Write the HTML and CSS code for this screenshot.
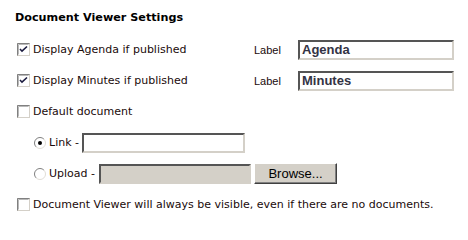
FILE: index.html
```html
<!DOCTYPE html>
<html>
<head>
<meta charset="utf-8">
<link rel="stylesheet" href="styles.css">
</head>
<body>
<div class="panel">
  <div class="title">Document Viewer Settings</div>

  <div class="row">
    <span class="chk"><svg width="13" height="13" viewBox="0 0 13 13"><rect x="0.5" y="0.5" width="12" height="12" fill="#fff" stroke="#d4d0c8"/><path d="M0.5 12.5V0.5H12.5" fill="none" stroke="#808080"/><path d="M1.5 11.5V1.5H11.5" fill="none" stroke="#b8b8b8"/><path d="M3 6l2 2.2L10 3.5" fill="none" stroke="#1c1c40" stroke-width="1.6"/></svg></span>
    <span class="text main">Display Agenda if published</span>
    <span class="lbl">Label</span>
    <span class="field bold">Agenda</span>
  </div>

  <div class="row">
    <span class="chk"><svg width="13" height="13" viewBox="0 0 13 13"><rect x="0.5" y="0.5" width="12" height="12" fill="#fff" stroke="#d4d0c8"/><path d="M0.5 12.5V0.5H12.5" fill="none" stroke="#808080"/><path d="M1.5 11.5V1.5H11.5" fill="none" stroke="#b8b8b8"/><path d="M3 6l2 2.2L10 3.5" fill="none" stroke="#1c1c40" stroke-width="1.6"/></svg></span>
    <span class="text main">Display Minutes if published</span>
    <span class="lbl">Label</span>
    <span class="field bold">Minutes</span>
  </div>

  <div class="row">
    <span class="chk"><svg width="13" height="13" viewBox="0 0 13 13"><rect x="0.5" y="0.5" width="12" height="12" fill="#fff" stroke="#d4d0c8"/><path d="M0.5 12.5V0.5H12.5" fill="none" stroke="#808080"/><path d="M1.5 11.5V1.5H11.5" fill="none" stroke="#b8b8b8"/></svg></span>
    <span class="text">Default document</span>
  </div>

  <div class="row sub">
    <span class="radio"><svg width="12" height="12" viewBox="0 0 12 12"><circle cx="6" cy="6" r="5.5" fill="#fff"/><path d="M2.1 9.9A5.5 5.5 0 0 1 9.9 2.1" fill="none" stroke="#808080"/><path d="M9.9 2.1A5.5 5.5 0 0 1 2.1 9.9" fill="none" stroke="#e0ddd6"/><circle cx="6" cy="6" r="2" fill="#000"/></svg></span>
    <span class="text">Link -</span>
    <span class="field link"></span>
  </div>

  <div class="row sub">
    <span class="radio"><svg width="12" height="12" viewBox="0 0 12 12"><circle cx="6" cy="6" r="5.5" fill="#fff"/><path d="M2.1 9.9A5.5 5.5 0 0 1 9.9 2.1" fill="none" stroke="#808080"/><path d="M9.9 2.1A5.5 5.5 0 0 1 2.1 9.9" fill="none" stroke="#e0ddd6"/></svg></span>
    <span class="text">Upload -</span>
    <span class="field file"></span>
    <span class="browse">Browse...</span>
  </div>

  <div class="row">
    <span class="chk"><svg width="13" height="13" viewBox="0 0 13 13"><rect x="0.5" y="0.5" width="12" height="12" fill="#fff" stroke="#d4d0c8"/><path d="M0.5 12.5V0.5H12.5" fill="none" stroke="#808080"/><path d="M1.5 11.5V1.5H11.5" fill="none" stroke="#b8b8b8"/></svg></span>
    <span class="text">Document Viewer will always be visible, even if there are no documents.</span>
  </div>
</div>
</body>
</html>
```

FILE: styles.css
```css
html, body {
  margin: 0;
  padding: 0;
  background: #fff;
}
.panel {
  padding: 9px 0 0 15px;
  font-family: "DejaVu Sans", Verdana, sans-serif;
  font-size: 11px;
  color: #1a0a0a;
}
.title {
  font-family: "DejaVu Sans", Verdana, sans-serif;
  font-weight: bold;
  font-size: 11.2px;
  color: #000;
  height: 25px;
  line-height: 18px;
}
.row {
  display: flex;
  align-items: center;
  height: 31px;
}
.row.sub {
  padding-left: 18px;
}
.chk {
  width: 13px;
  height: 13px;
  margin-left: 2px;
  margin-right: 3px;
  display: flex;
}
.radio {
  width: 12px;
  height: 12px;
  margin-left: 1px;
  margin-right: 3px;
  display: flex;
}
.text.main {
  width: 221px;
}
.lbl {
  font-family: "Liberation Sans", Arial, sans-serif;
  font-size: 11px;
  width: 44px;
}
.field {
  box-sizing: border-box;
  height: 20px;
  border-style: solid;
  border-width: 2px;
  border-color: #555 #d4d0c8 #d4d0c8 #555;
  background: #fff;
  display: flex;
  align-items: center;
  padding-left: 2px;
}
.field.bold {
  width: 156px;
  font-family: "Liberation Sans", Arial, sans-serif;
  font-weight: bold;
  font-size: 13px;
  color: #333344;
}
.field.link {
  width: 163px;
  margin-left: 3px;
}
.field.file {
  width: 152px;
  margin-left: 4px;
  background: #d4d0c8;
}
.browse {
  box-sizing: border-box;
  width: 83px;
  height: 21px;
  margin-left: 3px;
  background: #d4d0c8;
  border: 1px solid;
  border-color: #fff #404040 #404040 #fff;
  box-shadow: inset -1px -1px 0 #808080;
  font-family: "Liberation Sans", Arial, sans-serif;
  font-size: 13px;
  color: #000;
  display: flex;
  align-items: center;
  justify-content: center;
}
```
